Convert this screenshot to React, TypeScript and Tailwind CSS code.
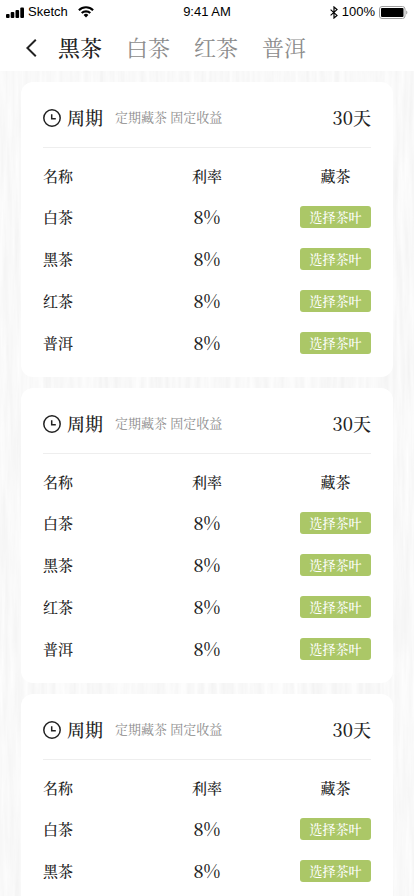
import React from 'react';

const teas = ['白茶', '黑茶', '红茶', '普洱'];
const tabs = ['黑茶', '白茶', '红茶', '普洱'];

const StatusBar: React.FC = () => {
  return (
    <div className="grid h-6 grid-cols-3 items-center px-1.5 font-['Liberation_Sans',Arial,sans-serif] text-[13px] text-black">
      <div className="flex items-center">
        <svg width="18" height="11" viewBox="0 0 18 11" fill="currentColor" aria-hidden="true">
          <rect x="0" y="7" width="3.6" height="4" rx="1" />
          <rect x="4.7" y="5" width="3.6" height="6" rx="1" />
          <rect x="9.5" y="3" width="3.6" height="8" rx="1" />
          <rect x="14.3" y="0.5" width="3.7" height="10.5" rx="1" />
        </svg>
        <span className="ml-1">Sketch</span>
        <svg className="ml-2.5" width="16" height="12" viewBox="0 0 16 12" fill="none" stroke="currentColor" strokeWidth="2.1" aria-hidden="true">
          <path d="M0.9 4.2a10.2 10.2 0 0 1 14.2 0" />
          <path d="M3.7 7.1a6.2 6.2 0 0 1 8.6 0" />
          <path d="M8 11.4 5.6 9a3.5 3.5 0 0 1 4.8 0z" fill="currentColor" stroke="none" />
        </svg>
      </div>
      <div className="text-center">9:41 AM</div>
      <div className="flex items-center justify-end">
        <svg width="8" height="13" viewBox="0 0 8 13" fill="none" stroke="currentColor" strokeWidth="1.2" aria-hidden="true">
          <path d="M0.6 3.6 7 9.4 4 12V1l3 2.6L0.6 9.4" />
        </svg>
        <span className="ml-1">100%</span>
        <svg className="ml-1" width="29" height="13" viewBox="0 0 29 13" aria-hidden="true">
          <rect x="0.5" y="0.5" width="25.5" height="12" rx="2.5" fill="none" stroke="#a0a0a0" />
          <rect x="2" y="2" width="22.5" height="9" rx="1" fill="#000" />
          <path d="M27.2 4.5c1.6.6 1.6 3.4 0 4z" fill="#a0a0a0" />
        </svg>
      </div>
    </div>
  );
};

const TabBar: React.FC = () => {
  return (
    <nav className="flex h-[47px] items-center pl-[26px]">
      <button aria-label="返回" className="mr-5 text-[#222]">
        <svg width="12" height="18" viewBox="0 0 12 18" fill="none" stroke="currentColor" strokeWidth="2">
          <path d="M9.8 0.8 1.4 9l8.4 8.2" />
        </svg>
      </button>
      <div className="flex gap-6 pb-0.5 text-[22px] leading-8">
        {tabs.map((tab, i) => (
          <button key={tab} className={i === 0 ? 'font-medium text-[#222]' : 'text-[#8c8c8c]'}>
            {tab}
          </button>
        ))}
      </div>
    </nav>
  );
};

// pale vertical wood grain behind the cards
const WoodGrain: React.FC = () => {
  return (
    <svg className="absolute inset-0 h-full w-full" aria-hidden="true">
      <filter id="grain" x="0" y="0" width="100%" height="100%" colorInterpolationFilters="sRGB">
        <feTurbulence type="fractalNoise" baseFrequency="0.2 0.012" numOctaves="3" seed="7" />
        <feColorMatrix values="0.06 0 0 0 0.945  0.06 0 0 0 0.945  0.06 0 0 0 0.945  0 0 0 0 1" />
      </filter>
      <rect width="100%" height="100%" filter="url(#grain)" />
    </svg>
  );
};

const PeriodCard: React.FC = () => {
  return (
    <section className="rounded-xl bg-white px-[22px] pb-[13px]">
      <div className="flex h-[66px] items-center border-b border-[#eee] pt-1.5">
        <svg width="18" height="18" viewBox="0 0 18 18" fill="none" stroke="#222" strokeWidth="1.5" aria-hidden="true">
          <circle cx="9" cy="9" r="8.2" />
          <path d="M8.7 5.2v4.6h4.1" />
        </svg>
        <h2 className="ml-1.5 pb-0.5 text-lg leading-7 font-medium">周期</h2>
        <p className="ml-3 pb-0.5 text-[13px] text-[#8c8c8c]">定期藏茶 固定收益</p>
        <span className="ml-auto pb-0.5 text-lg leading-7 font-medium">30天</span>
      </div>
      <table className="mt-2 w-full table-fixed text-[15px]">
        <thead>
          <tr className="h-10">
            <th className="w-[71px] p-0 text-left font-medium">名称</th>
            <th className="p-0 text-center font-medium">利率</th>
            <th className="w-[71px] p-0 text-center font-medium">藏茶</th>
          </tr>
        </thead>
        <tbody>
          {teas.map((tea) => (
            <tr key={tea} className="h-[42px]">
              <td className="p-0 font-medium">{tea}</td>
              <td className="p-0 pb-0.5 text-center text-lg font-medium">8%</td>
              <td className="p-0">
                <button className="block h-[22px] w-full rounded-[3px] bg-[#abc767] text-[13px] leading-[22px] font-medium text-white">
                  选择茶叶
                </button>
              </td>
            </tr>
          ))}
        </tbody>
      </table>
    </section>
  );
};

export default function App() {
  return (
    <div className="flex h-screen flex-col bg-white font-['Noto_Serif_CJK_SC','Noto_Serif_SC','Liberation_Serif','Noto_Sans_CJK_SC',serif] text-[#222]">
      <header>
        <StatusBar />
        <TabBar />
      </header>
      <main className="relative flex-1 overflow-hidden">
        <WoodGrain />
        <div className="relative h-full overflow-y-auto px-[21px] py-[11px] [scrollbar-width:none]">
          <div className="flex flex-col gap-[11px]">
            {[1, 2, 3].map((card) => (
              <PeriodCard key={card} />
            ))}
          </div>
        </div>
      </main>
    </div>
  );
}
